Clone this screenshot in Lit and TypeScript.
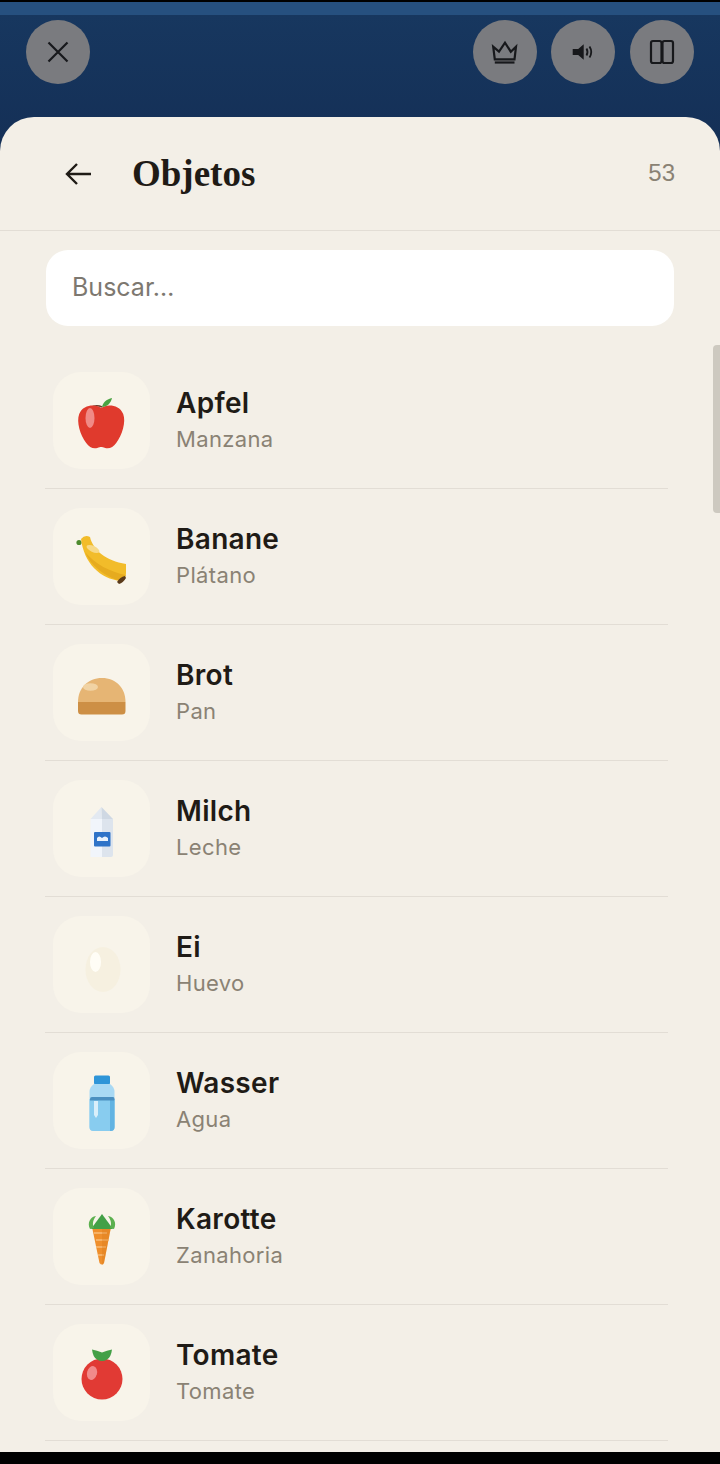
import { LitElement, html, css, svg } from "lit";
import { customElement } from "lit/decorators.js";

const ICONS = {
  apple: svg`
    <path d="M20 19q6-4 12-1" fill="none" stroke="#6b3a2a" stroke-width="1.600"/>
    <g transform="translate(-.8 0)">
      <path d="M32 19C37 15 50 15 54 25C57 33 53 46 47 54C44 58.500 40 60 36 59C34 58.400 33 58 32 58C31 58 30 58.400 28 59C24 60 20 58.500 17 54C11 46 7 33 10 25C14 15 27 15 32 19Z" fill="#e03a2d"/>
    </g>
    <path d="M32 18c1-5 5-8 10-9-1 5-5 9-10 9z" fill="#4aa342"/>
    <ellipse cx="20" cy="29" rx="4.500" ry="10" fill="#f08a86"/>`,
  banana: svg`
    <circle cx="9" cy="17.500" r="2.600" fill="#4d8a2e"/>
    <path d="M11 14q4-5 9-2c3 13 16 24 36 27v9q0 6-5 8C30 54 14 38 11 14z" fill="#f2bc2a"/>
    <path d="M15 27c6 14 20 25 36 29l5-6C40 47 25 39 15 27z" fill="#e6ab1f"/>
    <ellipse cx="23" cy="24" rx="7" ry="3" fill="#f7d987" transform="rotate(25 23 24)"/>
    <path d="M47 57q3-5 8-6l1 2q-3 5-7 6z" fill="#5b3a1a"/>`,
  bread: svg`
    <path d="M8 41C8 27 18 17 32 17s23.500 10 23.500 24z" fill="#e6b574"/>
    <path d="M8 41h47.500v9a3.500 3.500 0 0 1-3.500 3.500H11.500A3.500 3.500 0 0 1 8 50z" fill="#cd8f45"/>
    <ellipse cx="20.500" cy="26" rx="7.500" ry="3.800" fill="#f1d3a4"/>`,
  milk: svg`
    <path d="M20.500 22h11.500v38H20.500z" fill="#f1f5fb"/>
    <path d="M32 22h11v36q0 2-2 2h-9z" fill="#dde4ed"/>
    <path d="M20.500 22 31.500 10 32 22z" fill="#e3e9f1"/>
    <path d="M31.500 10 43 22H32z" fill="#cfd8e3"/>
    <rect x="24" y="35" width="16.500" height="14.500" rx="1" fill="#2f73c8"/>
    <path d="M27 41q2-3 5 0q3-3 6 0v3h-11z" fill="#eaf2fb"/>`,
  egg: svg`
    <ellipse cx="33" cy="36.500" rx="17.500" ry="22.500" fill="#f6f0e0"/>
    <ellipse cx="25.500" cy="29" rx="5.500" ry="10" fill="#fffdf6"/>`,
  water: svg`
    <rect x="24" y="6.500" width="16" height="9" rx="1.500" fill="#2f95d8"/>
    <path d="M24 15h16q4.500 3 4.500 8v35q0 4-4 4h-17q-4 0-4-4V23q0-5 4.500-8z" fill="#a9d9f4"/>
    <path d="M19.500 30h25v28q0 4-4 4h-17q-4 0-4-4z" fill="#88ccef"/>
    <path d="M40 62h.5q4 0 4-4V30H40z" fill="#62b3e2"/>
    <path d="M20 30q0-2 2-2h21q1.500 0 1.500 2l-.5 1.500H20z" fill="#4b8fc0"/>
    <path d="M24 32h4v14l-2 3-2-3z" fill="#d9effa"/>`,
  carrot: svg`
    <path d="M22 22h19l-7 36q-2 3-4.500 0z" fill="#ef8f2c"/>
    <path d="M24 28h13M26 35h13M26 42h10M28 50h6" stroke="#f9bd78" stroke-width="1.600" fill="none"/>
    <path d="M32 34V22h9l-7 36q-1 2-2 2z" fill="#d97a1c" opacity=".35"/>
    <path d="M21 24 32 9l11 15z" fill="#43a047"/>
    <path d="M20 24c-3-6 0-12 6-13-3 4-4 8-2 12zM44 24c3-6 0-12-6-13 3 4 4 8 2 12z" fill="#5cb04f"/>`,
  tomato: svg`
    <circle cx="32" cy="38" r="20.500" fill="#e13a34"/>
    <ellipse cx="22" cy="32" rx="5" ry="7" fill="#f18a8a" transform="rotate(15 22 32)"/>
    <path d="M22 8.500q5 1 10 3q5-2 10-3q-1 8-5 10q-5 3-10 0q-4-2-5-10z" fill="#43a047"/>`,
};

const ITEMS: { name: string; sub: string; icon: keyof typeof ICONS }[] = [
  { name: "Apfel", sub: "Manzana", icon: "apple" },
  { name: "Banane", sub: "Plátano", icon: "banana" },
  { name: "Brot", sub: "Pan", icon: "bread" },
  { name: "Milch", sub: "Leche", icon: "milk" },
  { name: "Ei", sub: "Huevo", icon: "egg" },
  { name: "Wasser", sub: "Agua", icon: "water" },
  { name: "Karotte", sub: "Zanahoria", icon: "carrot" },
  { name: "Tomate", sub: "Tomate", icon: "tomato" },
];

@customElement("app-root")
export class AppRoot extends LitElement {
  static styles = css`
    :host {
      display: flex;
      flex-direction: column;
      position: relative;
      width: 720px;
      height: 1464px;
      overflow: hidden;
      background: #000;
      font-family: "Inter", "Noto Sans", sans-serif;
    }
    .status {
      height: 13px;
      margin-top: 2px;
      background: #26507f;
    }
    .top {
      height: 136px;
      margin-bottom: -34px;
      box-sizing: border-box;
      padding: 5px 26px 0;
      display: flex;
      gap: 14.7px;
      background: linear-gradient(#17375f, #142f56);
    }
    .round {
      width: 64px;
      height: 64px;
      border-radius: 50%;
      background: #7a7b7f;
      display: flex;
      align-items: center;
      justify-content: center;
      flex: none;
    }
    .round svg {
      width: 32px;
      height: 32px;
      fill: none;
      stroke: #17181b;
      stroke-width: 2.2;
    }
    .spacer {
      flex: 1;
    }
    .sheet {
      height: 1335px;
      display: flex;
      flex-direction: column;
      background: #f3efe7;
      border-radius: 34px 34px 0 0;
      overflow: hidden;
      position: relative;
    }
    .sheet-head {
      flex: none;
      height: 114px;
      box-sizing: border-box;
      border-bottom: 1px solid #e2ddd5;
      display: flex;
      align-items: center;
      padding: 0 45px 0 64px;
    }
    .back {
      width: 30px;
      height: 30px;
      fill: none;
      stroke: #1f1b16;
      stroke-width: 2.4;
      margin-right: 38px;
      flex: none;
    }
    h1 {
      margin: 0;
      flex: 1;
      font: 700 37px "Liberation Serif", serif;
      color: #1f1b16;
    }
    .count {
      font: 24px "Liberation Sans", sans-serif;
      color: #8a8274;
      margin-bottom: 2px;
    }
    .search {
      flex: none;
      margin: 19px 46px 27px;
      height: 76px;
      box-sizing: border-box;
      padding: 0 0 2px 26px;
      display: flex;
      align-items: center;
      background: #fff;
      border-radius: 22px;
      font-size: 25px;
      color: #7d7870;
    }
    .list {
      margin: 0 52px 0 45px;
      display: flex;
      flex-direction: column;
    }
    .row {
      height: 136px;
      box-sizing: border-box;
      padding: 0 0 0 8px;
      display: flex;
      align-items: center;
      gap: 26px;
      border-bottom: 1px solid #e2ddd5;
      flex: none;
    }
    .tile {
      width: 97px;
      height: 97px;
      border-radius: 28px;
      background: #f8f4ea;
      display: flex;
      align-items: center;
      justify-content: center;
      flex: none;
    }
    .tile svg {
      width: 64px;
      height: 64px;
    }
    .name {
      font-size: 28px;
      line-height: 36px;
      font-weight: 600;
      letter-spacing: 0.3px;
      color: #1f1b16;
    }
    .sub {
      margin-top: 1px;
      font-size: 22px;
      line-height: 34px;
      letter-spacing: 0.35px;
      color: #8a8274;
    }
    .scrollbar {
      position: absolute;
      right: 0;
      top: 228px;
      width: 7px;
      height: 168px;
      border-radius: 4px 0 0 4px;
      background: #cdc9c0;
    }
  `;

  render() {
    return html`
      <div class="status"></div>
      <div class="top">
        <div class="round">
          <svg viewBox="0 0 32 32"><path d="M6.500 6.500l19 19M25.500 6.500l-19 19" /></svg>
        </div>
        <div class="spacer"></div>
        <div class="round">
          <svg viewBox="0 0 32 32">
            <path d="M5.800 23.300 4.200 10.700 10 15.700 16 6.700l5.800 9 5.200-5-1.500 12.600z" />
            <path d="M5.800 26.500h19.700" />
          </svg>
        </div>
        <div class="round">
          <svg viewBox="0 0 32 32">
            <path d="M5.700 13h5.500l5.500-4.700v15.400l-5.500-4.700H5.700z" fill="#17181b" stroke="none" />
            <path d="M19.500 12.500q2 3.500 0 7M22.500 10.500q3.500 5.500 0 11" stroke-width="1.800" />
          </svg>
        </div>
        <div class="round">
          <svg viewBox="0 0 32 32">
            <rect x="5" y="5" width="10.500" height="22" rx="2" />
            <rect x="16.500" y="5" width="10.500" height="22" rx="2" />
          </svg>
        </div>
      </div>
      <div class="sheet">
        <div class="sheet-head">
          <svg class="back" viewBox="0 0 30 30"><path d="M27 15H3M13 5 3 15l10 10" /></svg>
          <h1>Objetos</h1>
          <span class="count">53</span>
        </div>
        <div class="search">Buscar…</div>
        <div class="list">
          ${ITEMS.map(
            (item) => html`
              <div class="row">
                <div class="tile"><svg viewBox="0 0 64 64">${ICONS[item.icon]}</svg></div>
                <div>
                  <div class="name">${item.name}</div>
                  <div class="sub">${item.sub}</div>
                </div>
              </div>
            `
          )}
        </div>
        <div class="scrollbar"></div>
      </div>
    `;
  }
}
